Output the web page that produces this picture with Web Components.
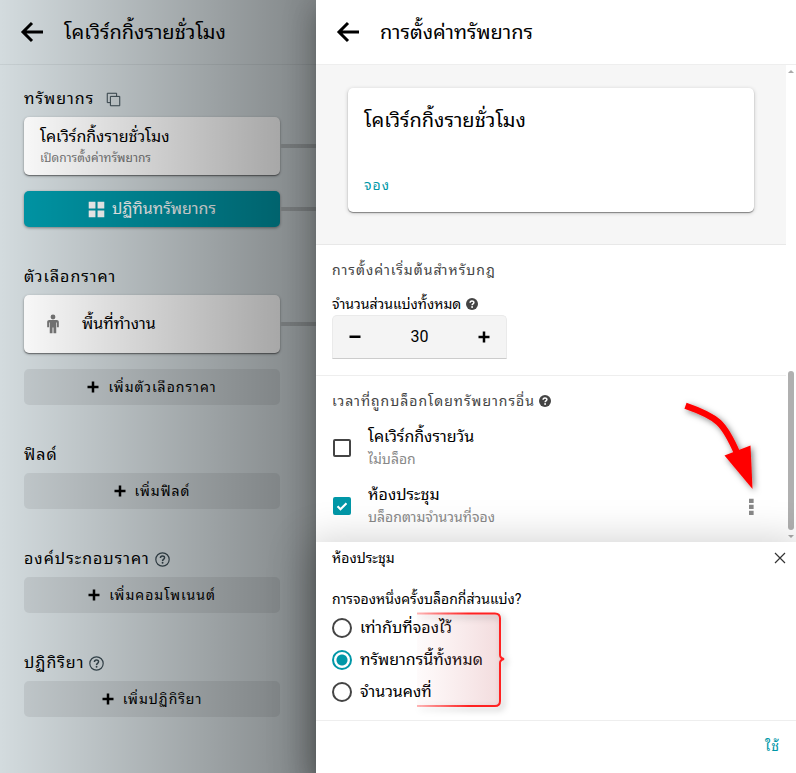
<!DOCTYPE html>
<html lang="th">
<head>
<meta charset="utf-8">
<meta name="viewport" content="width=device-width, initial-scale=1">
<title>การตั้งค่าทรัพยากร</title>
<style>
html, body { margin: 0; height: 100%; }
body { font-family: Roboto, Tahoma, "Noto Sans Thai Looped", Loma, "Noto Looped Thai", Waree, Umpush, Garuda, sans-serif; font-size: 16px; line-height: 24px; color: #000; --teal: #0097a7; overflow: hidden; }
</style>
</head>
<body>
<booking-app></booking-app>
<script>
const ICONS = {
  back: '<path d="M23 12H3M12 3 3 12l9 9" fill="none" stroke="currentColor" stroke-width="3"/>',
  copy: '<path d="M7 7h15v15H7zM17 7V2H2v15h5" fill="none" stroke="currentColor" stroke-width="1.600" stroke-linejoin="round"/>',
  grid: '<path d="M1 1h9.500v9.500H1zM13.500 1H23v9.500h-9.500zM1 13.500h9.500V23H1zM13.500 13.500H23V23h-9.500z" fill="currentColor"/>',
  plus: '<path d="M9.500 1h5v8.500H23v5h-8.500V23h-5v-8.500H1v-5h8.500z" fill="currentColor"/>',
  minus: '<path d="M1 9h22v5H1z" fill="currentColor"/>',
  person: '<circle cx="12" cy="3.600" r="2.900" fill="currentColor"/><path d="M7.500 7.200h9c1.600 0 2.500 1.100 2.500 2.500v6.100h-2.300v-5.500h-.8V23h-3.300v-6.800h-1.200V23H8.100V10.300h-.8v5.500H5V9.700c0-1.400.9-2.500 2.500-2.500z" fill="currentColor"/>',
  help: '<circle cx="12" cy="12" r="10.700" fill="none" stroke="currentColor" stroke-width="1.900"/><path d="M8.700 9.500c0-4 6.600-4 6.600-.3 0 2.500-3.200 2.500-3.200 5" fill="none" stroke="currentColor" stroke-width="2.400"/><circle cx="12.100" cy="17.200" r="1.500" fill="currentColor"/>',
  helpFill: '<circle cx="12" cy="12" r="12" fill="currentColor"/><path d="M8.200 9.300c0-4.600 7.600-4.500 7.600-.2 0 2.800-3.600 2.600-3.600 5.300" fill="none" stroke="#fff" stroke-width="3"/><circle cx="12.200" cy="18" r="1.900" fill="#fff"/>',
  close: '<path d="m2 2 20 20M22 2 2 22" fill="none" stroke="currentColor" stroke-width="2.400"/>',
  dots: '<path d="M8.500 1h6.500v6H8.500zM8.500 9.500h6.500v6H8.500zM8.500 18h6.500v6H8.500z" fill="currentColor"/>'
};
const RESET = `*{box-sizing:border-box}
button{font:inherit;letter-spacing:inherit;color:inherit;background:none;border:0;margin:0;padding:0;cursor:pointer}
h1,h2,p{margin:0;font:inherit}
ui-icon{flex:none}`;

function component(name, css, html, setup) {
  customElements.define(name, class extends HTMLElement {
    connectedCallback() {
      if (this.shadowRoot) return;
      const root = this.attachShadow({ mode: 'open' });
      const attr = key => this.getAttribute(key) || '';
      root.innerHTML = `<style>${RESET}${css}</style>${typeof html === 'function' ? html(attr, this) : html}`;
      if (setup) setup(root, this);
    }
  });
}

component('ui-icon',
  `:host{display:inline-block;width:var(--size,12px);height:var(--size,12px)} svg{display:block;width:100%;height:100%}`,
  a => `<svg viewBox="0 0 24 24" aria-hidden="true">${ICONS[a('name')]}</svg>`);

component('top-bar',
  `:host{display:flex;align-items:center;gap:20px;height:65px;padding:0 20px;border-bottom:1px solid var(--line,#eee);flex:none}
   button{display:flex;--size:24px} h1{font-size:20px;line-height:28px}`,
  `<button aria-label="กลับ"><ui-icon name="back"></ui-icon></button><h1><slot></slot></h1>`);

component('side-section',
  `:host{display:block}
   header{display:flex;align-items:center;gap:var(--label-gap,5px);height:36px;letter-spacing:1px}
   header ui-icon{--size:15px;color:#37474f}
   .items{display:grid;gap:16px}`,
  a => `<header><h2>${a('label')}</h2>${a('icon') ? `<ui-icon name="${a('icon')}"></ui-icon>` : ''}</header><div class="items"><slot></slot></div>`);

const CONNECTOR = `:host{display:block;position:relative}
   :host::after{content:"";position:absolute;left:100%;top:50%;width:36px;height:4px;margin-top:-2px;background:#b2b8ba}`;

component('item-card',
  `${CONNECTOR}
   button{display:flex;align-items:center;gap:16px;width:100%;height:58px;padding:0 16px;border-radius:5px;background:#fff;text-align:left;box-shadow:0 1px 3px #0005,0 1px 1px #0005}
   ui-icon{--size:20px;color:#777;margin:0 3px} span{display:block}
   .sub{font-size:12px;line-height:18px;color:#777}`,
  a => `<button>${a('icon') ? `<ui-icon name="${a('icon')}"></ui-icon>` : ''}<span><span><slot></slot></span>${a('sub') ? `<span class="sub">${a('sub')}</span>` : ''}</span></button>`);

component('calendar-button',
  `${CONNECTOR}
   button{display:flex;align-items:center;justify-content:center;gap:7px;width:100%;height:36px;border-radius:5px;background:var(--teal);color:#fff;box-shadow:0 1px 3px #0006}
   ui-icon{--size:17px}`,
  `<button><ui-icon name="grid"></ui-icon><slot></slot></button>`);

component('add-button',
  `:host{display:block}
   button{display:flex;align-items:center;justify-content:center;gap:9px;width:100%;height:36px;border-radius:5px;background:#00000012;font-size:14px;letter-spacing:1px}`,
  `<button><ui-icon name="plus"></ui-icon><slot></slot></button>`);

component('side-panel',
  `:host{display:flex;flex-direction:column;position:relative;background:#d3dbde;--line:#c6ced1;overflow:hidden}
   :host::after{content:"";position:absolute;inset:0;pointer-events:none;background:linear-gradient(90deg,#0000,#00000063)}
   nav{display:grid;gap:32px;padding:16px 36px 24px 24px}
   .copy{--label-gap:12px}`,
  `<top-bar>โคเวิร์กกิ้งรายชั่วโมง</top-bar>
   <nav>
    <side-section class="copy" label="ทรัพยากร" icon="copy">
      <item-card sub="เปิดการตั้งค่าทรัพยากร">โคเวิร์กกิ้งรายชั่วโมง</item-card>
      <calendar-button>ปฏิทินทรัพยากร</calendar-button>
    </side-section>
    <side-section label="ตัวเลือกราคา">
      <item-card icon="person">พื้นที่ทำงาน</item-card>
      <add-button>เพิ่มตัวเลือกราคา</add-button>
    </side-section>
    <side-section label="ฟิลด์"><add-button>เพิ่มฟิลด์</add-button></side-section>
    <side-section label="องค์ประกอบราคา" icon="help"><add-button>เพิ่มคอมโพเนนต์</add-button></side-section>
    <side-section label="ปฏิกิริยา" icon="help"><add-button>เพิ่มปฏิกิริยา</add-button></side-section>
   </nav>`);

component('preview-card',
  `:host{display:block;padding:23px 32px 32px;background:#f6f6f6;border-bottom:1px solid #e8e8e8}
   article{display:flex;flex-direction:column;justify-content:space-between;align-items:flex-start;min-height:124px;padding:16px 16px 15px;border-radius:5px;background:#fff;box-shadow:0 1px 1px #0006,0 1px 4px #0003}
   h2{font-size:20px;line-height:32px}
   button{font-size:14px;line-height:24px;letter-spacing:1px;color:var(--teal)}`,
  a => `<article><h2><slot></slot></h2><button>${a('action')}</button></article>`);

component('settings-group',
  `:host{display:block;padding:13px 16px 16px} :host(:not(:last-child)){border-bottom:1px solid #eee}
   h2{display:flex;align-items:center;gap:4px;font-size:14px;line-height:24px;letter-spacing:1px;color:#444}`,
  a => `<h2>${a('label')}${a('help') ? '<ui-icon name="helpFill"></ui-icon>' : ''}</h2><slot></slot>`);

component('number-stepper',
  `:host{display:block;margin-top:11px}
   label{display:flex;align-items:center;gap:5px;font-size:14px;line-height:22px} label ui-icon{color:#444}
   .box{display:grid;grid-template-columns:44px 1fr 44px;width:175px;height:44px;background:#f4f4f4;border-radius:5px 5px 0 0;border:1px solid #eaeaea;border-bottom-color:#ccc}
   button{display:grid;place-items:center} input{min-width:0;width:100%;border:0;background:none;font:inherit;text-align:center;padding:0}`,
  a => `<label for="n">${a('label')}<ui-icon name="helpFill"></ui-icon></label>
   <div class="box"><button aria-label="ลด"><ui-icon name="minus"></ui-icon></button><input id="n" inputmode="numeric" value="${a('value')}"><button aria-label="เพิ่ม"><ui-icon name="plus"></ui-icon></button></div>`,
  root => {
    const input = root.querySelector('input');
    root.querySelectorAll('button').forEach((b, i) => b.onclick = () => { input.value = Math.max(0, +input.value + (i ? 1 : -1)); });
  });

component('check-row',
  `:host{display:flex;align-items:center;height:58px;gap:8px}
   label{display:flex;align-items:center;gap:17px;flex:1;line-height:22px}
   input{appearance:none;flex:none;width:18px;height:18px;margin:0 0 0 1px;border:2px solid #444;border-radius:2px}
   input:checked{border-color:var(--teal);background:var(--teal) url('data:image/svg+xml,<svg xmlns="http://www.w3.org/2000/svg" viewBox="0 0 16 16"><path d="M3.500 8.200l3 3 6-6" fill="none" stroke="white" stroke-width="2.200"/></svg>') center/16px}
   span{display:block} .sub{font-size:14px;color:#888}
   button{display:flex;--size:17px;color:#888;margin-right:10px}`,
  (a, host) => `<label><input type="checkbox" ${host.hasAttribute('checked') ? 'checked' : ''}><span><span><slot></slot></span><span class="sub">${a('sub')}</span></span></label>
   ${host.hasAttribute('menu') ? '<button aria-label="ตัวเลือก"><ui-icon name="dots"></ui-icon></button>' : ''}`);

component('scroll-rail',
  `:host{display:grid;grid-template-rows:12px 1fr 12px;justify-items:center;align-items:center;background:#fff}
   i{border:3px solid transparent} .up{border-bottom-color:#aaa;border-top:0} .down{border-top-color:#aaa;border-bottom:0}
   .thumb{width:6px;height:35%;align-self:end;border-radius:3px;background:#b0b0b0}`,
  `<i class="up"></i><div class="thumb"></div><i class="down"></i>`);

component('radio-list',
  `:host{display:block;position:relative}
   fieldset{border:0;margin:0;padding:0;min-width:0}
   legend{padding:0;font-size:14px;line-height:26px}
   label{display:flex;align-items:center;gap:8px;height:32px}
   input{appearance:none;flex:none;width:20px;height:20px;margin:0;border:2px solid #444;border-radius:50%}
   input:checked{border-color:var(--teal);background:radial-gradient(circle,var(--teal) 5px,#0000 6px)}
   svg{position:absolute;left:84px;top:26px;pointer-events:none;overflow:visible}`,
  `<fieldset><legend>การจองหนึ่งครั้งบล็อกกี่ส่วนแบ่ง?</legend>
    <label><input type="radio" name="share">เท่ากับที่จองไว้</label>
    <label><input type="radio" name="share" checked>ทรัพยากรนี้ทั้งหมด</label>
    <label><input type="radio" name="share">จำนวนคงที่</label>
   </fieldset>
   <svg width="92" height="96" viewBox="0 0 92 96" aria-hidden="true">
    <defs>
     <linearGradient id="f"><stop offset="0" stop-color="#d9777d" stop-opacity=".03"/><stop offset="1" stop-color="#c8666d" stop-opacity=".24"/></linearGradient>
     <linearGradient id="s" gradientUnits="userSpaceOnUse" x1="0" y1="0" x2="88" y2="0"><stop offset="0" stop-color="#f22" stop-opacity=".3"/><stop offset=".6" stop-color="#f22"/></linearGradient>
     <filter id="b" x="-20%" y="-20%" width="150%" height="150%"><feDropShadow dx="3" dy="3" stdDeviation="3" flood-opacity=".3"/></filter>
    </defs>
    <path d="M1 1.500h78q5 0 5 5V43l4 4-4 4v38q0 5-5 5H1" fill="url(#f)"/>
    <path d="M1 1.500h78q5 0 5 5V43q0 3 4 4-4 1-4 4v38q0 5-5 5H1" fill="none" stroke="url(#s)" stroke-width="2" filter="url(#b)"/>
   </svg>`);

component('bottom-sheet',
  `:host{display:block;flex:none;position:relative;background:#fff;box-shadow:0 8px 40px 8px #0003}
   header{display:flex;align-items:center;justify-content:space-between;height:32px;padding:0 10px 0 16px;font-size:14px}
   header button{display:flex;--size:12px;color:#333}
   .body{padding:12px 16px} footer{display:flex;justify-content:flex-end;align-items:center;height:53px;padding:0 16px 2px;border-top:1px solid #eee}
   footer button{font-size:14px;letter-spacing:1px;color:var(--teal)}`,
  a => `<header><h2>${a('label')}</h2><button aria-label="ปิด"><ui-icon name="close"></ui-icon></button></header>
   <div class="body"><slot></slot></div><footer><button>${a('action')}</button></footer>`);

component('settings-drawer',
  `:host{display:flex;flex-direction:column;position:relative;background:#fff;box-shadow:0 8px 10px -5px #0002,0 16px 24px 2px #0002,0 6px 30px 5px #0002}
   .scroll{display:grid;grid-template-columns:1fr 10px;flex:1;min-height:0;overflow:hidden}
   .content{min-height:0;overflow:hidden}
   .rows{margin-top:6px}
   .pointer{position:absolute;right:40px;top:400px;pointer-events:none;overflow:visible}`,
  `<top-bar>การตั้งค่าทรัพยากร</top-bar>
   <div class="scroll">
    <div class="content">
     <preview-card action="จอง">โคเวิร์กกิ้งรายชั่วโมง</preview-card>
     <settings-group label="การตั้งค่าเริ่มต้นสำหรับกฎ"><number-stepper label="จำนวนส่วนแบ่งทั้งหมด" value="30"></number-stepper></settings-group>
     <settings-group label="เวลาที่ถูกบล็อกโดยทรัพยากรอื่น" help="1">
      <div class="rows">
       <check-row sub="ไม่บล็อก">โคเวิร์กกิ้งรายวัน</check-row>
       <check-row sub="บล็อกตามจำนวนที่จอง" checked menu>ห้องประชุม</check-row>
      </div>
     </settings-group>
    </div>
    <scroll-rail></scroll-rail>
   </div>
   <bottom-sheet label="ห้องประชุม" action="ใช้"><radio-list></radio-list></bottom-sheet>
   <svg class="pointer" width="76" height="92" viewBox="0 0 76 92" aria-hidden="true">
    <defs><filter id="p" x="-20%" y="-20%" width="150%" height="150%"><feDropShadow dx="2" dy="2" stdDeviation="3" flood-opacity=".5"/></filter></defs>
    <g filter="url(#p)"><path d="M5.500 5.800C38 17 44 23 57.500 54" fill="none" stroke="red" stroke-width="6.500"/><path d="M44.500 55.500 70.500 45.500 72.500 89z" fill="red"/></g>
   </svg>`);

component('booking-app',
  `:host{display:flex;min-height:100vh}
   side-panel{flex:1;min-width:0} settings-drawer{flex:none;width:min(480px,100%);height:100vh}`,
  `<side-panel></side-panel><settings-drawer></settings-drawer>`);
</script>
</body>
</html>
